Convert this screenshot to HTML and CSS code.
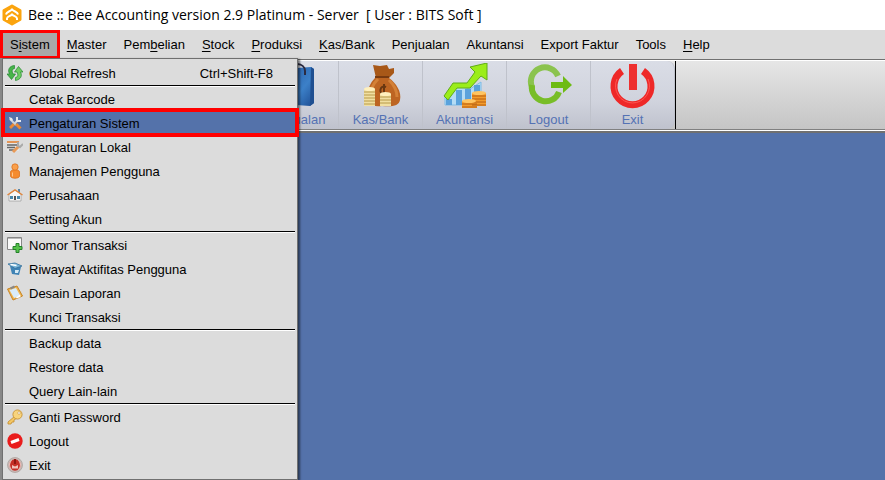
FILE: index.html
```html
<!DOCTYPE html>
<html lang="id">
<head>
    <meta charset="UTF-8">
    <meta name="viewport" content="width=device-width, initial-scale=1.0">
    <title>Bee Accounting</title>
    <link rel="stylesheet" href="styles.css">
</head>
<body>
    <!-- Title bar -->
    <header class="titlebar">
        <svg class="logo" viewBox="0 0 20 22">
            <path d="M10 2 18 6.500v9L10 20l-8-4.500v-9z" fill="#fba40e" stroke="#fba40e" stroke-width="3" stroke-linejoin="round"/>
            <path d="M4 10.500c.5-3 3.500-2.500 6-5 2.500 2.500 5.500 2 6 5M5 16v-1.500c0-2.500 3-2 5-4 2 2 5 1.500 5 4V16" fill="none" stroke="#fff" stroke-width="2"/>
        </svg>
        <h1>Bee :: Bee Accounting version 2.9 Platinum - Server&nbsp; [ User : BITS Soft ]</h1>
    </header>

    <!-- Menu bar -->
    <nav class="menubar">
        <button class="menu active">S<u>i</u>stem</button>
        <button class="menu"><u>M</u>aster</button>
        <button class="menu">Pem<u>b</u>elian</button>
        <button class="menu"><u>S</u>tock</button>
        <button class="menu"><u>P</u>roduksi</button>
        <button class="menu"><u>K</u>as/Bank</button>
        <button class="menu">Penjualan</button>
        <button class="menu">Akuntansi</button>
        <button class="menu">Export Faktur</button>
        <button class="menu">Tools</button>
        <button class="menu"><u>H</u>elp</button>

        <!-- Sistem menu -->
        <div class="dropdown">
            <button class="item">
                <svg viewBox="0 0 16 16">
                    <path d="M7.500.500C2 1 .500 5 2.500 9H0l4.500 5.500L8.500 9H6C4.500 6 5 4 7.500 3.500z" fill="#48b54a" stroke="#238432" stroke-width=".7"/>
                    <path d="M8.500 15.500c5.500-1 7-5 5-8.500H16l-4.500-5.500L7.500 7H10c1.500 3 1 5-1.500 5.500z" fill="#6fce63" stroke="#238432" stroke-width=".7"/>
                </svg>
                <span>Global Refresh</span>
                <kbd>Ctrl+Shift-F8</kbd>
            </button>
            <hr>
            <button class="item"><span>Cetak Barcode</span></button>
            <button class="item selected">
                <svg viewBox="0 0 16 16">
                    <path d="M3 4l6 6" stroke="#ccd3dc" stroke-width="2"/>
                    <path d="M2 2l3 1 1 2-1 1-2-1z" fill="#e8e8e8"/>
                    <path d="M9 9l4.500 4.500" stroke="#e98a35" stroke-width="3"/>
                    <path d="M3 13l4-4" stroke="#e98a35" stroke-width="3"/>
                    <path d="M7 9l4-4" stroke="#ccd3dc" stroke-width="2"/>
                    <path d="M10 2v4h4" fill="none" stroke="#e4e8ee" stroke-width="2"/>
                </svg>
                <span>Pengaturan Sistem</span>
            </button>
            <button class="item">
                <svg viewBox="0 0 16 16">
                    <path d="M0 3h12v9H0z" fill="#e6e6e6"/>
                    <path d="M0 3h12" stroke="#e59555" stroke-width="2"/>
                    <path d="M0 6h10M0 8.500h8M2 11h5" stroke="#666" stroke-width="1.500"/>
                    <path d="M6 13l6-6" stroke="#e99a57" stroke-width="3"/>
                    <path d="M11 3v4l2 1 3-3" fill="none" stroke="#aaa" stroke-width="2"/>
                </svg>
                <span>Pengaturan Lokal</span>
            </button>
            <button class="item">
                <svg viewBox="0 0 16 16">
                    <path d="M3.500 9c0-3 9-3 9 0v4c0 3-9 3-9 0z" fill="#f58b2e" stroke="#d96a16" stroke-width=".7"/>
                    <circle cx="8" cy="4" r="3.200" fill="#f9a04c" stroke="#d96a16" stroke-width=".7"/>
                    <path d="M5.500 9.500v4" stroke="#ffc58d"/>
                </svg>
                <span>Manajemen Pengguna</span>
            </button>
            <button class="item">
                <svg viewBox="0 0 16 16">
                    <path d="M11 2h2v5h-2z" fill="#5a87a8"/>
                    <path d="M2 7l6-4 6 4v7H2z" fill="#f7f7f7" stroke="#999" stroke-width=".7"/>
                    <path d="M.500 8L8 3l7.500 5" fill="none" stroke="#e0853c" stroke-width="1.500"/>
                    <path d="M3 9h3v3H3zM10 9h3v3h-3z" fill="#4788ad"/>
                    <path d="M7 9h2v4H7z" fill="#555"/>
                </svg>
                <span>Perusahaan</span>
            </button>
            <button class="item"><span>Setting Akun</span></button>
            <hr>
            <button class="item">
                <svg viewBox="0 0 16 16">
                    <path d="M.5.500h14v12H.5z" fill="#fafafa" stroke="#888"/>
                    <path d="M1 1.500h13" stroke="#bbb"/>
                    <path d="M9 6.500h3v3h3v3h-3v3H9v-3H6v-3h3z" fill="#55c24a" stroke="#24812a"/>
                </svg>
                <span>Nomor Transaksi</span>
            </button>
            <button class="item">
                <svg viewBox="0 0 16 16">
                    <path d="M3 5l11 1-2 8-7-1z" fill="#3f83b5"/>
                    <path d="M1 3l7-1 7 3-7 2.500z" fill="#78b5d8" stroke="#336e9a" stroke-width=".8"/>
                    <path d="M3.500 3.500l6 1" stroke="#fff" stroke-width="1.500"/>
                    <path d="M8 9h4l-1 3H8z" fill="#d5eaf5"/>
                </svg>
                <span>Riwayat Aktifitas Pengguna</span>
            </button>
            <button class="item">
                <svg viewBox="0 0 16 16">
                    <path d="M.500 4L10 1l5.500 10L6 15z" fill="#f0b44c" stroke="#c68427"/>
                    <path d="M2.500 5L9 3l4.500 8L7 13z" fill="#d9ecfa"/>
                    <path d="M9 12.500l4-3 .5 2.500-4 1.500z" fill="#fff"/>
                    <path d="M3.500 3.500l4-2" stroke="#888" stroke-width="2"/>
                </svg>
                <span>Desain Laporan</span>
            </button>
            <button class="item"><span>Kunci Transaksi</span></button>
            <hr>
            <button class="item"><span>Backup data</span></button>
            <button class="item"><span>Restore data</span></button>
            <button class="item"><span>Query Lain-lain</span></button>
            <hr>
            <button class="item">
                <svg viewBox="0 0 16 16">
                    <path d="M8 7l-7 6v2h3l1-2h2v-2l3-2z" fill="#f3c765" stroke="#c38a2b" stroke-width=".8"/>
                    <circle cx="10.500" cy="5.500" r="4.600" fill="#f8d47c" stroke="#c38a2b" stroke-width=".8"/>
                    <circle cx="12" cy="4" r="1.300" fill="#fff" stroke="#b78535" stroke-width=".5"/>
                </svg>
                <span>Ganti Password</span>
            </button>
            <button class="item">
                <svg viewBox="0 0 16 16">
                    <circle cx="8" cy="8" r="7.700" fill="#e91c1c"/>
                    <path d="M4 9.500l8-3" stroke="#fff" stroke-width="3"/>
                </svg>
                <span>Logout</span>
            </button>
            <button class="item">
                <svg viewBox="0 0 16 16">
                    <circle cx="8" cy="8" r="7.500" fill="#c9b9b5" stroke="#a09490" stroke-width=".6"/>
                    <circle cx="8" cy="8" r="5.800" fill="#c52f27"/>
                    <path d="M4.500 3.500c-3 3-2 7 0 9M11.500 3.500c3 3 2 7 0 9" fill="none" stroke="#f5d6d0"/>
                    <path d="M5 8l3 1.500L11 8v3.500H5z" fill="#f0c4bd"/>
                    <path d="M8 2v5" stroke="#8d1712" stroke-width="2"/>
                </svg>
                <span>Exit</span>
            </button>
        </div>
    </nav>

    <!-- Toolbar -->
    <div class="toolbar">
        <div class="tools">
            <button class="tool">
                <svg viewBox="0 0 48 48">
                    <defs>
                        <linearGradient id="bag" x2="1" y2="1"><stop stop-color="#2457a2"/><stop offset=".6" stop-color="#3c80c8"/><stop offset="1" stop-color="#1c4b91"/></linearGradient>
                    </defs>
                    <path d="M10 6l28-2 3 2v34l-4 3-27-2z" fill="url(#bag)"/>
                    <path d="M38 4l3 2v34l-4 3z" fill="#1f4f91"/>
                    <path d="M17 11V6c0-7 15-7 15 2v4" fill="none" stroke="#2b2b42" stroke-width="2"/>
                </svg>
                <span>Penjualan</span>
            </button>
            <button class="tool">
                <svg viewBox="0 0 48 48">
                    <path d="M16 2l7 1 7-1 2 4 5-1v5l-5 5H19z" fill="#a85818"/>
                    <path d="M18 15h14c7 5 13 14 11 22-1 6-8 7-18 6-11 1-16-2-15-8 0-8 3-15 8-20z" fill="#bd6522"/>
                    <path d="M21 16c-5 5-8 11-8 18M32 17c5 5 8 10 8 17" fill="none" stroke="#d48137" stroke-width="3"/>
                    <path d="M18 14h14" stroke="#783a10" stroke-width="2"/>
                    <path d="M29 24c-6-3-8 7-2 7l3-1M27 21v12" fill="none" stroke="#693711" stroke-width="2"/>
                    <path d="M7 26h11v17H7zM23 31h11v12H23z" fill="#f1dfa1"/>
                    <path d="M7 29h11M7 32h11M7 35h11M7 38h11M7 41h11M23 34h11M23 37h11M23 40h11" stroke="#b79a4b"/>
                    <ellipse cx="12.500" cy="26" rx="5.500" ry="2" fill="#fff0bd"/>
                    <ellipse cx="28.500" cy="31" rx="5.500" ry="2" fill="#fff0bd"/>
                </svg>
                <span>Kas/Bank</span>
            </button>
            <button class="tool">
                <svg viewBox="0 0 48 48">
                    <path d="M4 42V33l13-10 12 3 11-7v23z" fill="#b4dcf5" stroke="#7fbce6"/>
                    <path d="M5 36h6v6H5zM15 27h6v15h-6zM24 26h6v16h-6zM33 22h6v20h-6z" fill="#5aa2dc"/>
                    <path d="M3 33l9-13h14l8-11-5-5 17-4v17l-6-4-11 12H16L7 37z" fill="#9bed19" stroke="#60ac17"/>
                    <path d="M31 30h14v13H31zM21 38h15v7H21z" fill="#f39b2b"/>
                    <path d="M31 33h14M31 36h14M31 39h14M31 42h14M21 41h15M21 44h15" stroke="#b65f13"/>
                    <ellipse cx="38" cy="30" rx="7" ry="2" fill="#ffc562"/>
                    <ellipse cx="28" cy="38" rx="7" ry="2" fill="#ffc562"/>
                </svg>
                <span>Akuntansi</span>
            </button>
            <button class="tool">
                <svg viewBox="0 0 48 48">
                    <path d="M33 13A14 14 0 0 0 7 24" fill="none" stroke="#8bc34f" stroke-width="6"/>
                    <path d="M7 22a14 14 0 0 0 27 7" fill="none" stroke="#78bd28" stroke-width="6"/>
                    <path d="M26 19h12v-6l9 9-9 8v-5H26z" fill="#6dbb12"/>
                </svg>
                <span>Logout</span>
            </button>
            <button class="tool">
                <svg viewBox="0 0 48 48">
                    <path d="M13 8A18.500 18.500 0 1 0 34 8" fill="none" stroke="#ee2828" stroke-width="7"/>
                    <path d="M8 16a17 17 0 1 0 31 0" fill="none" stroke="#ff5550" stroke-width="1"/>
                    <path d="M20 1h8v26h-8z" fill="#ee3030"/>
                </svg>
                <span>Exit</span>
            </button>
        </div>
    </div>

    <main class="workspace"></main>
</body>
</html>
```

FILE: styles.css
```css
* {
    box-sizing: border-box;
}
body {
    margin: 0;
    min-height: 100vh;
    display: flex;
    flex-direction: column;
    background-color: #5472aa;
    color: #000;
    font-family: "Liberation Sans", Arial, sans-serif;
    font-size: 13px;
}
button {
    border: none;
    background: none;
    padding: 0;
    color: inherit;
    font: inherit;
}
.titlebar {
    display: flex;
    align-items: center;
    gap: 6px;
    height: 30px;
    padding-left: 2px;
    background-color: #fff;
}
.logo {
    width: 20px;
    height: 22px;
}
h1 {
    margin: 0;
    font-family: "Open Sans", sans-serif;
    font-size: 14px;
    font-weight: 400;
    line-height: 30px;
    white-space: nowrap;
}
.menubar {
    position: relative;
    display: flex;
    gap: 1px;
    height: 30px;
    padding-left: 2px;
    background-color: #dcdcdc;
    border-bottom: 1px solid #707070;
}
.menu {
    position: relative;
    padding: 0 8px;
    white-space: nowrap;
}
u {
    text-underline-offset: 2px;
}
.menu.active {
    background-color: #a8a8a8;
}
.menu.active::after {
    content: "";
    position: absolute;
    inset: 0 -2px 0 -2px;
    border: 3px solid #f00;
}
.dropdown {
    position: absolute;
    z-index: 2;
    top: 28px;
    left: 2px;
    width: 296px;
    padding: 2px 0;
    background-color: #dcdcdc;
    border: 1px solid #707070;
    box-shadow: 2px 1px 2px rgba(0, 0, 0, 0.5), -2px 0 0 #888;
}
.item {
    position: relative;
    display: flex;
    align-items: center;
    width: 100%;
    height: 24px;
    padding: 0 24px 0 26px;
    text-align: left;
}
.item svg {
    position: absolute;
    left: 4px;
    width: 16px;
    height: 16px;
}
.item kbd {
    margin-left: auto;
    font: inherit;
}
.item.selected {
    background-color: #5472aa;
}
.item.selected::after {
    content: "";
    position: absolute;
    inset: -3px -2px -2px;
    border: 4px solid #f00;
}
hr {
    height: 2px;
    margin: 0 2px;
    border: none;
    border-top: 1px solid #000;
    background-color: #fff;
}
.toolbar {
    height: 73px;
    padding-left: 255px;
    background: linear-gradient(#e6e6e6, #c4c4c4);
    border-top: 1px solid #fff;
    border-bottom: 2px solid #707070;
    box-shadow: inset 0 -1px #fff, inset 0 -2px #808080;
}
.tools {
    display: flex;
    width: fit-content;
    height: 68px;
    border-right: 1px solid #000;
}
.tool {
    display: flex;
    flex-direction: column;
    align-items: center;
    width: 84px;
    padding-top: 2px;
    background: linear-gradient(#dadde6, #d0d3dd 60%, #bfc2cd);
    border-right: 1px solid #bfc2cb;
    color: #5472b4;
}
.tool:last-child {
    border-radius: 0 8px 8px 0;
}
.tool svg {
    width: 48px;
    height: 48px;
}
.tool span {
    line-height: 18px;
}
.workspace {
    flex: 1;
}
```
